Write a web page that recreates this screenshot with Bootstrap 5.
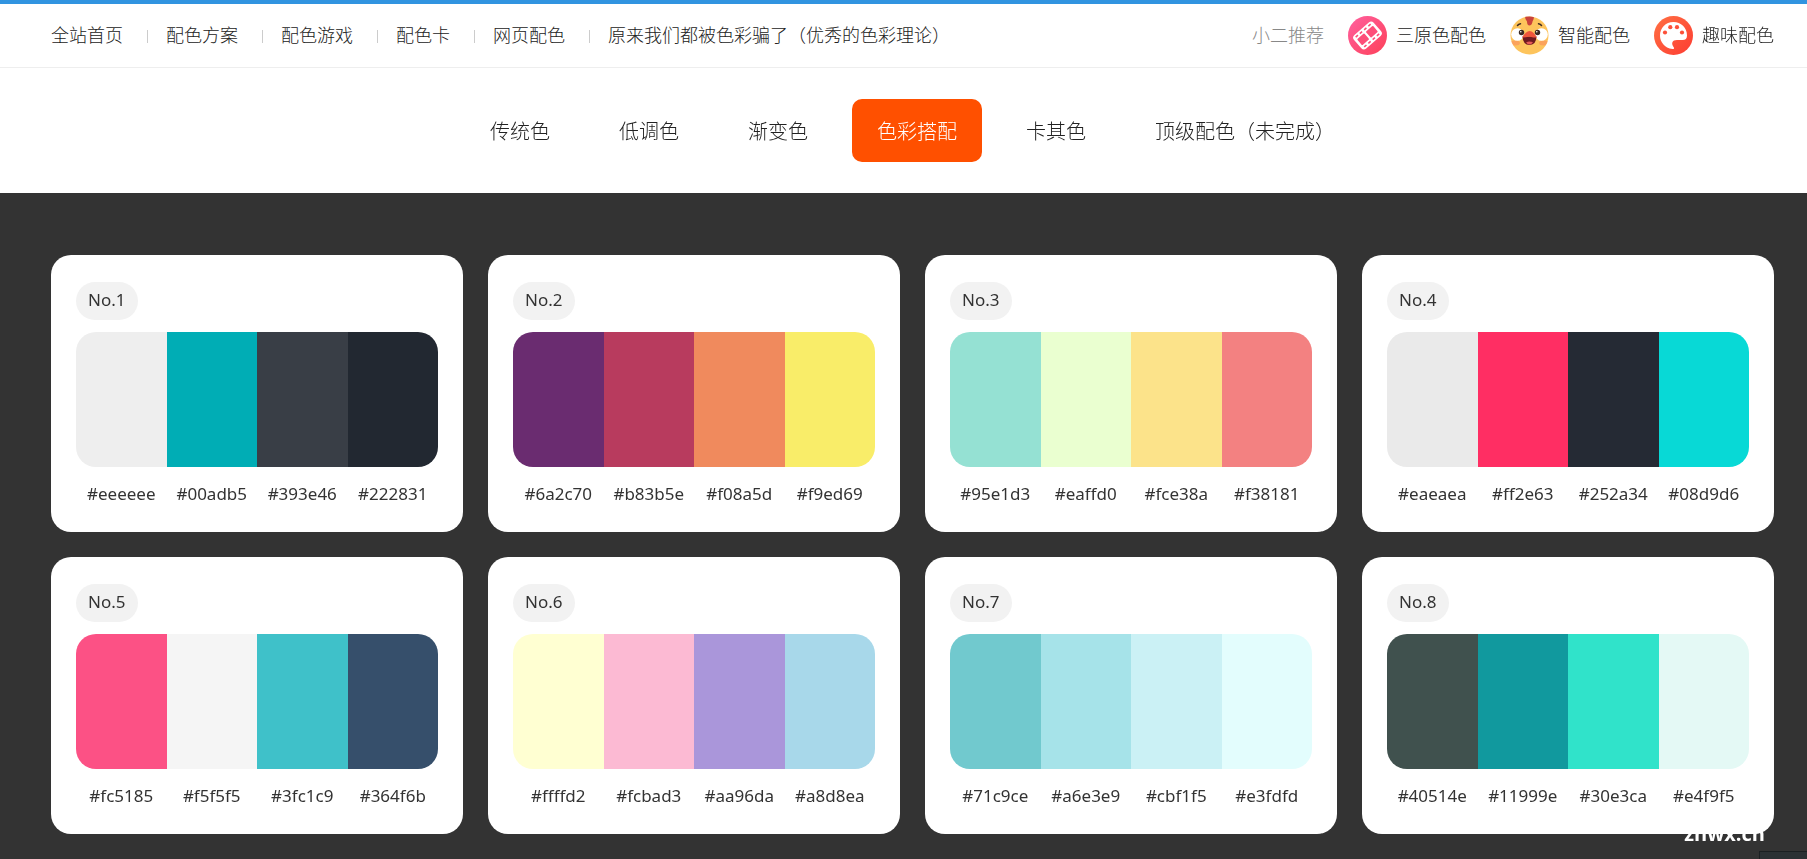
<!DOCTYPE html>
<html lang="zh-CN">
<head>
<meta charset="utf-8">
<meta name="viewport" content="width=device-width, initial-scale=1">
<title>色彩搭配</title>
<link href="https://cdn.jsdelivr.net/npm/bootstrap@5.3.0/dist/css/bootstrap.min.css" rel="stylesheet">
<style>
  body { background: #333; color: #222; font: 300 18px/24px "Noto Sans", "Noto Sans CJK SC", sans-serif; }
  a { color: inherit; text-decoration: none; }
  .site-head { background: #fff; border-top: 4px solid #3194e0; }
  .page-pad { padding-left: 51px; padding-right: 33px; }
  .top-bar { min-height: 64px; border-bottom: 1px solid #eee; }
  .site-links li + li::before { content: ""; display: inline-block; width: 1px; height: 13px; margin: 0 18px 0 24px; background: #ccc; vertical-align: -1px; }
  .site-links, .pick-text { padding-bottom: 2px; }
  .picks { gap: 24px; }
  .picks a { gap: 9px; }
  .picks svg { width: 39px; height: 39px; }
  .hint { color: #888; }
  .tabs { gap: 19px; padding-top: 31px; padding-bottom: 31px; font-size: 20px; }
  .tabs a { padding: 21px 25px 18px; border-radius: 10px; }
  .tabs a.active { background: #ff5000; color: #fff; }
  .palettes { display: grid; grid-template-columns: repeat(auto-fill, minmax(360px, 1fr)); gap: 25px; padding-top: 62px; padding-bottom: 24px; }
  .palette { background: #fff; border-radius: 20px; padding: 27px 25px 25px; color: #333; font-size: 17px; font-weight: 400; }
  .palette-no { display: inline-block; background: #f2f2f2; border-radius: 19px; padding: 6px 12px 8px; margin-bottom: 12px; }
  .swatches { height: 135px; border-radius: 20px; }
  .codes { padding-top: 15px; padding-bottom: 1px; }
  .watermark { position: fixed; right: 42px; bottom: 13px; color: #fff; font: 700 20px/24px "Open Sans", sans-serif; z-index: -1; }
  .corner { position: fixed; right: 0; bottom: 0; width: 48px; height: 8px; border: 1px solid #1b2022; border-width: 1px 0 0 1px; background: #2b3134; }
</style>
</head>
<body>
<header class="site-head">
  <div class="top-bar page-pad d-flex flex-wrap justify-content-between align-items-center">
    <ul class="site-links list-unstyled d-flex flex-wrap mb-0">
      <li><a href="#">全站首页</a></li>
      <li><a href="#">配色方案</a></li>
      <li><a href="#">配色游戏</a></li>
      <li><a href="#">配色卡</a></li>
      <li><a href="#">网页配色</a></li>
      <li><a href="#">原来我们都被色彩骗了（优秀的色彩理论）</a></li>
    </ul>
    <div class="picks d-flex flex-wrap align-items-center">
      <span class="hint pick-text">小二推荐</span>
      <a href="#" class="d-flex align-items-center">
        <svg viewBox="0 0 39 39" aria-hidden="true">
          <defs><linearGradient id="pink" x1="0" y1="0" x2="1" y2="1"><stop offset="0" stop-color="#ff609f"/><stop offset="1" stop-color="#fd4058"/></linearGradient></defs>
          <circle cx="19.5" cy="19.5" r="19.5" fill="url(#pink)"/>
          <g transform="rotate(-41 19.5 19.5)">
            <rect x="6.5" y="10.5" width="26" height="18" rx="3.5" fill="#fff"/>
            <g fill="#fd4e79">
              <rect x="9" y="15.5" width="9.5" height="8" rx="1"/><rect x="20.5" y="15.5" width="9.5" height="8" rx="1"/>
              <path d="M9.5 12.2h3v1.6h-3zM15 12.2h3v1.6h-3zM20.7 12.2h3v1.6h-3zM26.3 12.2h3v1.6h-3zM9.5 25.2h3v1.6h-3zM15 25.2h3v1.6h-3zM20.7 25.2h3v1.6h-3zM26.3 25.2h3v1.6h-3z"/>
            </g>
          </g>
        </svg>
        <span class="pick-text">三原色配色</span>
      </a>
      <a href="#" class="d-flex align-items-center">
        <svg viewBox="0 0 39 39" aria-hidden="true">
          <defs><clipPath id="face"><circle cx="19.5" cy="19.5" r="19"/></clipPath></defs>
          <g clip-path="url(#face)">
            <rect width="39" height="39" fill="#fdc45c"/>
            <ellipse cx="5" cy="27" rx="5" ry="2.5" fill="#fba35c"/><ellipse cx="34" cy="27" rx="5" ry="2.5" fill="#fba35c"/>
            <path d="M15 0h9q0 4-1.5 5.5Q22 9.5 19.5 9.5T17 5.5Q15 4 15 0z" fill="#c9413c"/>
            <circle cx="7.5" cy="18.5" r="6.3" fill="#fff"/><circle cx="31.5" cy="18.5" r="6.3" fill="#fff"/>
          </g>
          <path d="M7.5 9.5q1-1.500 3-1.700M31.5 9.500q-1-1.500-3-1.700" fill="none" stroke="#3b2a25" stroke-width="1.5" stroke-linecap="round"/>
          <circle cx="11.5" cy="16.5" r="2.7" fill="#3b2a25"/><circle cx="27.5" cy="16.5" r="2.7" fill="#3b2a25"/>
          <circle cx="10.8" cy="15.7" r=".8" fill="#fff"/><circle cx="26.8" cy="15.7" r=".8" fill="#fff"/>
          <path d="M12.5 20.5h14q-.5 8.5-7 8.500t-7-8.500z" fill="#6f1a20"/>
          <path d="M16 26.5q3.500-2 7 0-1.500 2-3.500 2t-3.500-2z" fill="#e65a57"/>
          <path d="M12 21.5Q16 15 19.5 15t7.500 6.500q-4 0-7.500-1-3.500 1-7.500 1z" fill="#ef553c"/>
        </svg>
        <span class="pick-text">智能配色</span>
      </a>
      <a href="#" class="d-flex align-items-center">
        <svg viewBox="0 0 39 39" aria-hidden="true">
          <defs><linearGradient id="orange" x1="0" y1="0" x2="1" y2="1"><stop offset="0" stop-color="#ff7043"/><stop offset="1" stop-color="#fd3c32"/></linearGradient></defs>
          <circle cx="19.5" cy="19.5" r="19.5" fill="url(#orange)"/>
          <path d="M19.5 6C11.5 6 6 12 6 19.5c0 6.500 4.500 12.500 12.500 13.500 1.500.2 2-.7 1.200-1.800-2.700-3.700-1.700-7.200 3.300-7.200h5.500c3 0 4.500-1.500 4.500-4.500C33 11.500 27 6 19.500 6z" fill="#fff"/>
          <g fill="#fd5039"><circle cx="11" cy="16.5" r="2.1"/><circle cx="16.3" cy="11.2" r="2.1"/><circle cx="23" cy="11.2" r="2.1"/><circle cx="28" cy="16.5" r="2.1"/></g>
        </svg>
        <span class="pick-text">趣味配色</span>
      </a>
    </div>
  </div>
  <nav class="tabs page-pad d-flex flex-wrap justify-content-center">
    <a href="#">传统色</a>
    <a href="#">低调色</a>
    <a href="#">渐变色</a>
    <a href="#" class="active" aria-current="page">色彩搭配</a>
    <a href="#">卡其色</a>
    <a href="#">顶级配色（未完成）</a>
  </nav>
</header>

<main class="palettes page-pad" id="palettes"></main>
<div class="watermark">znwx.cn</div>
<div class="corner"></div>

<script src="https://cdn.jsdelivr.net/npm/bootstrap@5.3.0/dist/js/bootstrap.bundle.min.js"></script>
<script>
  const palettes = [
    ['#eeeeee', '#00adb5', '#393e46', '#222831'],
    ['#6a2c70', '#b83b5e', '#f08a5d', '#f9ed69'],
    ['#95e1d3', '#eaffd0', '#fce38a', '#f38181'],
    ['#eaeaea', '#ff2e63', '#252a34', '#08d9d6'],
    ['#fc5185', '#f5f5f5', '#3fc1c9', '#364f6b'],
    ['#ffffd2', '#fcbad3', '#aa96da', '#a8d8ea'],
    ['#71c9ce', '#a6e3e9', '#cbf1f5', '#e3fdfd'],
    ['#40514e', '#11999e', '#30e3ca', '#e4f9f5']
  ];
  document.getElementById('palettes').innerHTML = palettes.map((colors, i) => `
    <section class="palette">
      <div class="palette-no">No.${i + 1}</div>
      <div class="swatches d-flex overflow-hidden">${colors.map(c => `<div class="flex-fill" style="background:${c}"></div>`).join('')}</div>
      <div class="codes row g-0 text-center">${colors.map(c => `<span class="col-3">${c}</span>`).join('')}</div>
    </section>`).join('');
</script>
</body>
</html>
